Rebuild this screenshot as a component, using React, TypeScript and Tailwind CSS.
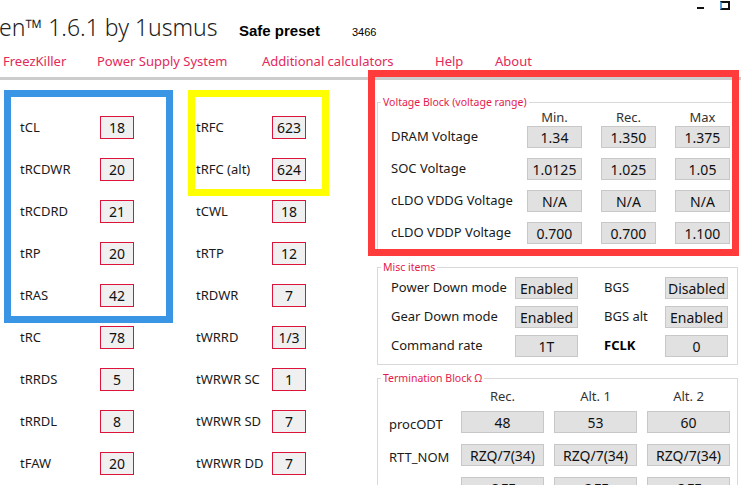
const timingsLeft = [
  ["tCL", "18"],
  ["tRCDWR", "20"],
  ["tRCDRD", "21"],
  ["tRP", "20"],
  ["tRAS", "42"],
  ["tRC", "78"],
  ["tRRDS", "5"],
  ["tRRDL", "8"],
  ["tFAW", "20"],
];

const timingsRight = [
  ["tRFC", "623"],
  ["tRFC (alt)", "624"],
  ["tCWL", "18"],
  ["tRTP", "12"],
  ["tRDWR", "7"],
  ["tWRRD", "1/3"],
  ["tWRWR SC", "1"],
  ["tWRWR SD", "7"],
  ["tWRWR DD", "7"],
];

const voltages = [
  ["DRAM Voltage", "1.34", "1.350", "1.375"],
  ["SOC Voltage", "1.0125", "1.025", "1.05"],
  ["cLDO VDDG Voltage", "N/A", "N/A", "N/A"],
  ["cLDO VDDP Voltage", "0.700", "0.700", "1.100"],
];

const misc = [
  ["Power Down mode", "Enabled", "BGS", "Disabled"],
  ["Gear Down mode", "Enabled", "BGS alt", "Enabled"],
  ["Command rate", "1T", "FCLK", "0"],
];

const termination = [
  ["procODT", "48", "53", "60"],
  ["RTT_NOM", "RZQ/7(34)", "RZQ/7(34)", "RZQ/7(34)"],
  ["RTT_WR", "OFF", "OFF", "OFF"],
];

const menu = [
  ["FreezKiller", "w-[94px]"],
  ["Power Supply System", "w-[165px]"],
  ["Additional calculators", "w-[173px]"],
  ["Help", "w-[60px]"],
  ["About", "w-[60px]"],
];

function TimingBox({ value }: { value: string }) {
  return (
    <div className="w-[34px] h-[23px] border border-[#dc143c] bg-[#f0f0f0] flex items-center justify-center text-[14px] text-[#111]">
      {value}
    </div>
  );
}

function ValueBox({ value, className }: { value: string; className: string }) {
  return (
    <div
      className={`${className} h-[22px] border border-[#c8c8c8] bg-[#e1e1e1] flex items-center justify-center text-[14px] text-[#111]`}
    >
      {value}
    </div>
  );
}

function Legend({ children }: { children: React.ReactNode }) {
  return (
    <legend className="ml-[3px] px-[2px] text-[10.5px] leading-[14px] text-[#e6194b]">{children}</legend>
  );
}

export default function App() {
  return (
    <div
      className="relative w-[741px] h-[485px] overflow-hidden bg-white text-[#1a1a1a]"
      style={{ fontFamily: '"Noto Sans", "Open Sans", sans-serif' }}
    >
      {/* header */}
      <div className="h-[46px] flex items-baseline pt-[11px]">
        <div className="w-[240px] -ml-[1px] text-[23px] leading-[32px] font-light text-[#222] whitespace-nowrap">
          en™ 1.6.1 by 1usmus
        </div>
        <div
          className="w-[113px] text-[15px] font-bold text-black"
          style={{ fontFamily: '"Liberation Sans", Arial, sans-serif' }}
        >
          Safe preset
        </div>
        <div className="text-[11px] text-black" style={{ fontFamily: '"Liberation Sans", Arial, sans-serif' }}>
          3466
        </div>
      </div>

      {/* window controls */}
      <div className="absolute left-[697px] top-[7px] w-[7px] h-[2px] bg-[#111]" />
      <div className="absolute left-[720px] top-[1px] w-[10px] h-[9px] border-2 border-[#111] border-l-[#5aa0e0] bg-white" />

      {/* menu */}
      <div className="h-[31px] flex items-center pl-[3px] text-[13px] text-[#e3285a]">
        {menu.map(([label, w]) => (
          <div key={label} className={`${w} whitespace-nowrap`}>
            {label}
          </div>
        ))}
      </div>
      <div className="h-[3px] bg-[#cccccc]" />

      <div className="flex">
        {/* timings */}
        <div className="w-[375px] flex">
          <div className="w-[196px] pl-[20px] pt-[36px] flex flex-col gap-[19px]">
            {timingsLeft.map(([label, value]) => (
              <div key={label} className="flex items-center h-[23px]">
                <div className="w-[80px] text-[13px]">{label}</div>
                <TimingBox value={value} />
              </div>
            ))}
          </div>
          <div className="w-[179px] pt-[36px] flex flex-col gap-[19px]">
            {timingsRight.map(([label, value]) => (
              <div key={label} className="flex items-center h-[23px]">
                <div className="w-[76px] text-[13px] whitespace-nowrap">{label}</div>
                <TimingBox value={value} />
              </div>
            ))}
          </div>
        </div>

        {/* blocks */}
        <div className="flex-1 pl-[2px] pt-[15px] flex flex-col">
          <fieldset className="w-[361px] border border-[#d9d9d9] pb-[6px]">
            <Legend>Voltage Block (voltage range)</Legend>
            <div className="flex items-center h-[17px] pl-[13px] text-[13px] text-[#333]">
              <div className="w-[136px]" />
              <div className="w-[55px] text-center">Min.</div>
              <div className="w-[55px] ml-[19px] text-center">Rec.</div>
              <div className="w-[55px] ml-[19px] text-center">Max</div>
            </div>
            <div className="flex flex-col gap-[10px] pl-[13px]">
              {voltages.map(([label, a, b, c]) => (
                <div key={label} className="flex items-center h-[22px]">
                  <div className="w-[136px] text-[13px] whitespace-nowrap">{label}</div>
                  <ValueBox value={a} className="w-[55px]" />
                  <ValueBox value={b} className="w-[55px] ml-[19px]" />
                  <ValueBox value={c} className="w-[55px] ml-[19px]" />
                </div>
              ))}
            </div>
          </fieldset>

          <fieldset className="w-[361px] mt-[9px] border border-[#d9d9d9] pb-[7px]">
            <Legend>Misc items</Legend>
            <div className="flex flex-col gap-[7px] pt-[3px] pl-[13px]">
              {misc.map(([l1, v1, l2, v2]) => (
                <div key={l1} className="flex items-center h-[22px]">
                  <div className="w-[124px] text-[13px] whitespace-nowrap">{l1}</div>
                  <ValueBox value={v1} className="w-[63px]" />
                  <div className={`w-[61px] ml-[26px] text-[13px] ${l2 === "FCLK" ? "font-bold text-black" : ""}`}>
                    {l2}
                  </div>
                  <ValueBox value={v2} className="w-[63px]" />
                </div>
              ))}
            </div>
          </fieldset>

          <fieldset className="w-[361px] mt-[6px] border border-[#d9d9d9] pb-[8px]">
            <Legend>Termination Block Ω</Legend>
            <div className="flex items-center h-[24px] pl-[11px] text-[13px] text-[#333]">
              <div className="w-[72px]" />
              <div className="w-[83px] text-center">Rec.</div>
              <div className="w-[83px] ml-[10px] text-center">Alt. 1</div>
              <div className="w-[83px] ml-[10px] text-center">Alt. 2</div>
            </div>
            <div className="flex flex-col gap-[11px] pt-[2px] pl-[11px]">
              {termination.map(([label, a, b, c]) => (
                <div key={label} className="flex items-center h-[22px]">
                  <div className="w-[72px] text-[13px] pt-[6px]">{label}</div>
                  <ValueBox value={a} className="w-[83px]" />
                  <ValueBox value={b} className="w-[83px] ml-[10px]" />
                  <ValueBox value={c} className="w-[83px] ml-[10px]" />
                </div>
              ))}
            </div>
          </fieldset>
        </div>
      </div>

      {/* annotation frames */}
      <div className="absolute left-[4px] top-[90px] w-[169px] h-[233px] border-[7px] border-[#3a95e4]" />
      <div className="absolute left-[188px] top-[90px] w-[141px] h-[106px] border-[7px] border-[#ffff00]" />
      <div className="absolute left-[368px] top-[70px] w-[371px] h-[186px] border-[7px] border-[#ff3b3b]" />
    </div>
  );
}
